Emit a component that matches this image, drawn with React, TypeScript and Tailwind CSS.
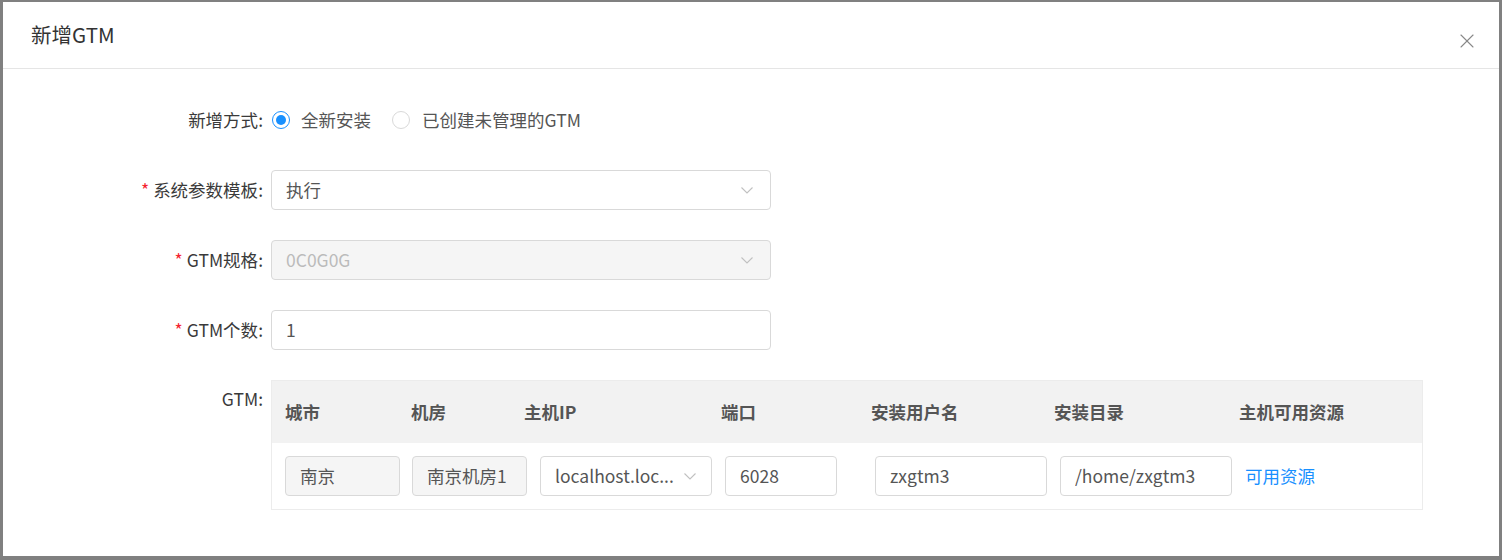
import { X } from 'lucide-react'

const font = { fontFamily: '"Noto Sans CJK SC", "Noto Sans", sans-serif' }

function Label({ text, required }: { text: string; required?: boolean }) {
  return (
    <div className="w-[268px] shrink-0 text-right text-[17.5px] text-[#3a3a3a] pr-[8px]">
      {required && <span className="text-[#f5222d] mr-[4px]">*</span>}
      {text}:
    </div>
  )
}

function Chevron() {
  return (
    <svg width="14" height="14" viewBox="0 0 14 14" className="shrink-0">
      <path d="M1.5 4.5 L7 10 L12.5 4.5" fill="none" stroke="#c0c0c0" strokeWidth="1.1" />
    </svg>
  )
}

function Box({
  children,
  w,
  disabled,
  select,
}: {
  children: React.ReactNode
  w: string
  disabled?: boolean
  select?: boolean
}) {
  return (
    <div
      className={`${w} h-[40px] shrink-0 flex items-center justify-between pl-[14px] pr-[16px] rounded-[4px] border border-[#d9d9d9] text-[17.5px] ${
        disabled ? 'bg-[#f5f5f5] text-[#555]' : 'bg-white text-[#555]'
      }`}
    >
      <span className="truncate">{children}</span>
      {select && <Chevron />}
    </div>
  )
}

export default function App() {
  return (
    <div className="w-[1502px] h-[560px] bg-[#808080] pt-[2px] pl-[3px] pr-[3px] pb-[4px]" style={font}>
      <div className="w-full h-full bg-white flex flex-col">
        <div className="h-[67px] shrink-0 flex items-center justify-between border-b border-[#e5e5e5] pl-[28px] pr-[20px]">
          <span className="text-[20.5px] text-[#333] -mt-[2px]">新增GTM</span>
          <X className="w-[24px] h-[24px] text-[#888] mt-[12px]" strokeWidth={1.1} />
        </div>

        <div className="flex flex-col pt-[31px] gap-[30px]">
          <div className="flex items-center h-[40px]">
            <Label text="新增方式" />
            <div className="flex items-center text-[17.5px] text-[#555]">
              <span className="w-[18px] h-[18px] rounded-full border border-[#1890ff] flex items-center justify-center ml-[1px]">
                <span className="w-[10px] h-[10px] rounded-full bg-[#1890ff]" />
              </span>
              <span className="ml-[11px]">全新安装</span>
              <span className="w-[18px] h-[18px] rounded-full border border-[#d9d9d9] ml-[21px]" />
              <span className="ml-[12px]">已创建未管理的GTM</span>
            </div>
          </div>

          <div className="flex items-center h-[40px]">
            <Label text="系统参数模板" required />
            <Box w="w-[500px]" select>
              执行
            </Box>
          </div>

          <div className="flex items-center h-[40px]">
            <Label text="GTM规格" required />
            <div className="w-[500px] h-[40px] flex items-center justify-between pl-[14px] pr-[16px] rounded-[4px] border border-[#d9d9d9] bg-[#f5f5f5] text-[17.5px] text-[#bbb]">
              <span>0C0G0G</span>
              <Chevron />
            </div>
          </div>

          <div className="flex items-center h-[40px]">
            <Label text="GTM个数" required />
            <Box w="w-[500px]">1</Box>
          </div>

          <div className="flex items-start">
            <div className="w-[268px] shrink-0 text-right text-[17.5px] text-[#3a3a3a] pr-[8px] pt-[6px]">GTM:</div>
            <div className="w-[1152px] border border-[#ececec]">
              <div className="flex items-center h-[62px] bg-[#f2f2f2] text-[17.5px] font-bold text-[#555]">
                <div className="w-[126px] pl-[13px]">城市</div>
                <div className="w-[113px] pl-[13px]">机房</div>
                <div className="w-[197px] pl-[13px]">主机IP</div>
                <div className="w-[150px] pl-[13px]">端口</div>
                <div className="w-[183px] pl-[13px]">安装用户名</div>
                <div className="w-[185px] pl-[13px]">安装目录</div>
                <div className="pl-[13px]">主机可用资源</div>
              </div>
              <div className="flex items-center h-[66px] pl-[13px]">
                <Box w="w-[115px]" disabled>
                  南京
                </Box>
                <div className="w-[12px]" />
                <Box w="w-[115px]" disabled>
                  南京机房1
                </Box>
                <div className="w-[13px]" />
                <div className="w-[172px] h-[40px] shrink-0 flex items-center justify-between pl-[14px] pr-[14px] rounded-[4px] border border-[#d9d9d9] text-[17.5px] text-[#555]">
                  <span className="truncate">localhost.loc...</span>
                  <Chevron />
                </div>
                <div className="w-[13px]" />
                <Box w="w-[112px]">6028</Box>
                <div className="w-[38px]" />
                <Box w="w-[172px]">zxgtm3</Box>
                <div className="w-[13px]" />
                <Box w="w-[172px]">/home/zxgtm3</Box>
                <div className="w-[13px]" />
                <span className="text-[17.5px] text-[#1890ff]">可用资源</span>
              </div>
            </div>
          </div>
        </div>
      </div>
    </div>
  )
}
